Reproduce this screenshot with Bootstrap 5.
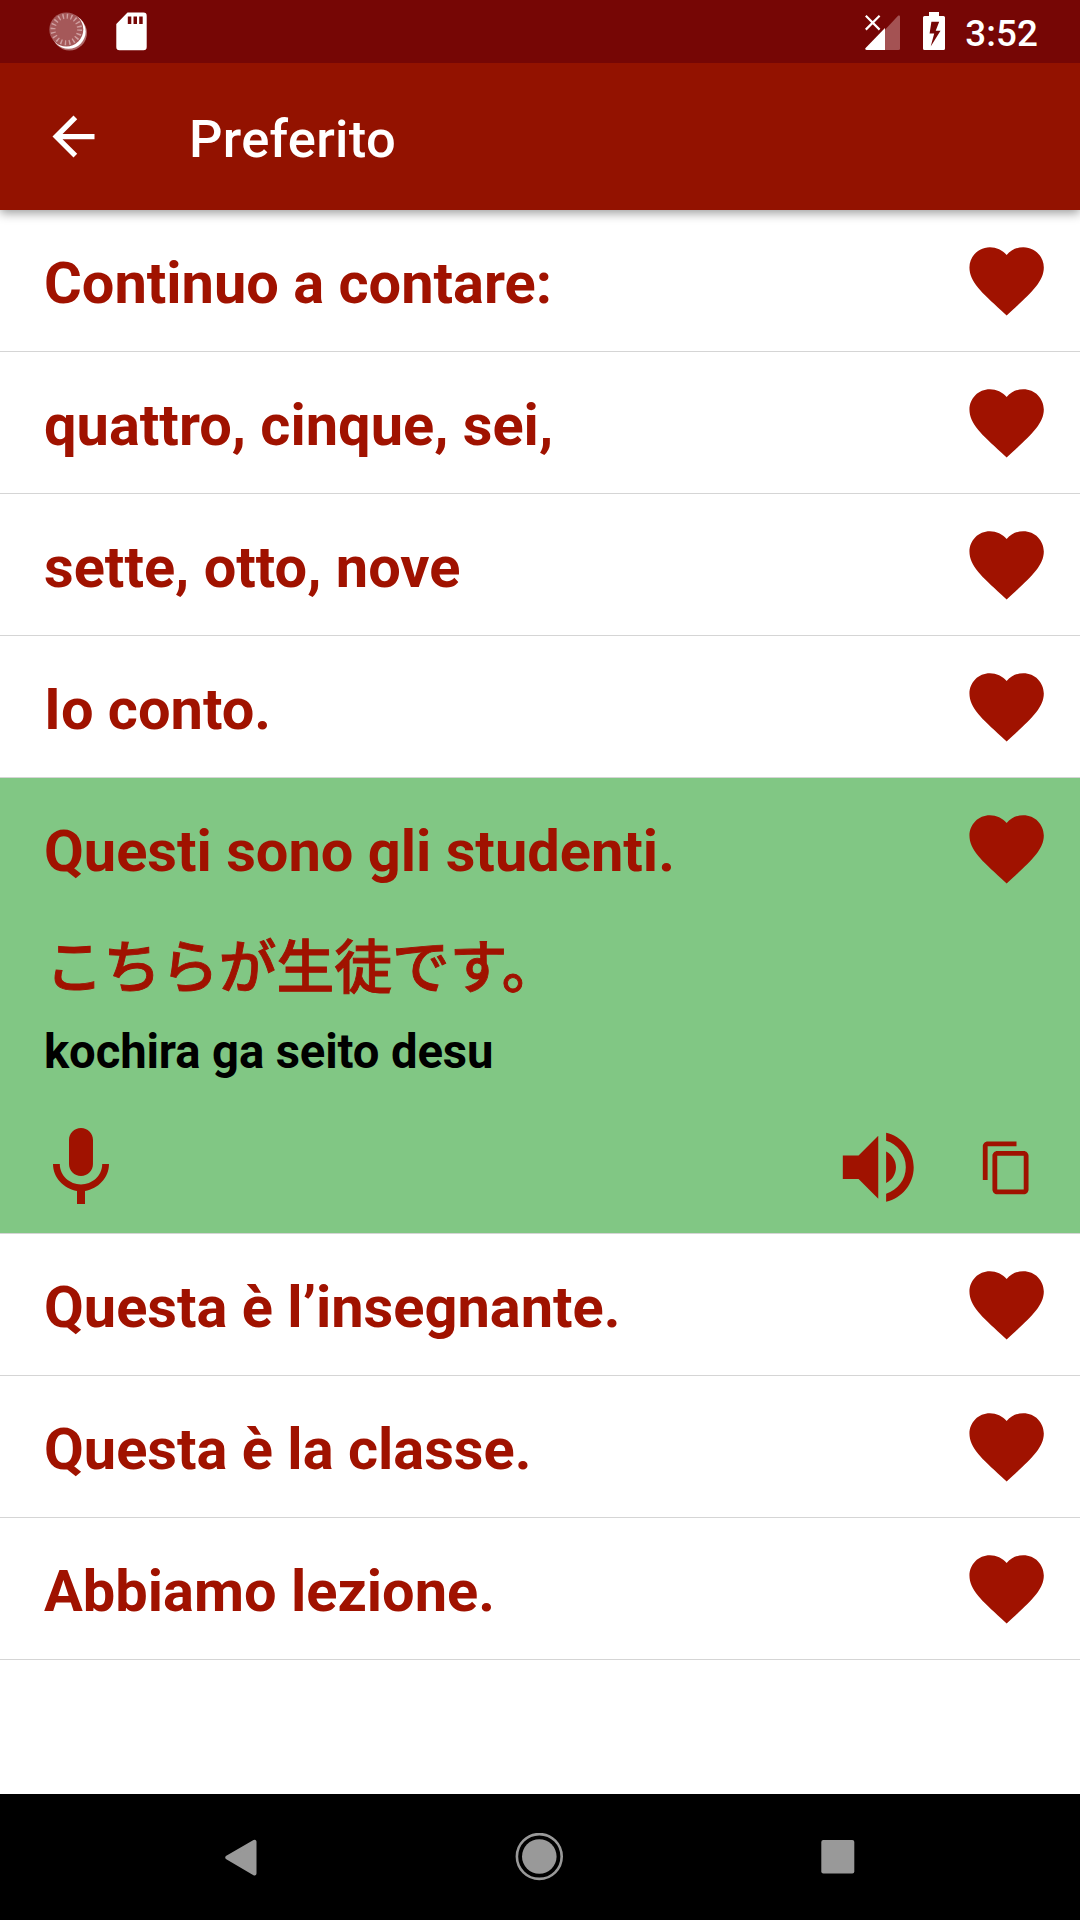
<!DOCTYPE html>
<html lang="it">
<head>
<meta charset="utf-8">
<meta name="viewport" content="width=device-width, initial-scale=1">
<title>Preferito</title>
<link href="https://cdn.jsdelivr.net/npm/bootstrap@5.3.0/dist/css/bootstrap.min.css" rel="stylesheet">
<style>
  :root { --brand: #a01200; }
  body { font-family: Roboto, "Noto Sans CJK JP", sans-serif; background: #fff; height: 1920px; overflow: hidden; }
  svg { display: block; flex: none; }
  .status-bar { height: 63px; background: #760605; padding: 0 42px 0 48px; z-index: 3; }
  .sd-icon { margin-left: 26px; }
  .battery-icon { margin-left: 23px; }
  .clock { font-size: 36.75px; line-height: 42px; font-weight: 500; padding-top: 4px; margin-left: 20.5px; letter-spacing: .1px; }
  .app-bar { height: 147px; background: #931200; padding: 0 42px; box-shadow: 0 3px 10px rgba(0,0,0,.4); z-index: 2; }
  .app-title { font-size: 52.5px; line-height: 62px; font-weight: 500; margin-left: 84px; padding-top: 4px; letter-spacing: .3px; }
  .list-group-flush > .phrase { border: 0; border-bottom: 1px solid #d5d5d5; border-radius: 0; padding: 0; color: var(--brand); background: #fff; }
  .list-group-flush > .phrase:last-child { border-bottom-width: 1px; }
  .phrase-head { height: 141px; padding: 26px 28.7px 0 44px; }
  .phrase-text { font-size: 57.75px; line-height: 68px; font-weight: 700; padding-top: 13px; }
  .list-group-flush > .phrase.open { background: #81c784; height: 456px; }
  .translation { font-size: 57.75px; line-height: 84px; font-weight: 500; font-family: "Noto Sans CJK JP", sans-serif; padding: 2px 45.5px 0; -webkit-text-stroke: .9px var(--brand); }
  .romaji { font-size: 47.25px; line-height: 56px; font-weight: 700; color: #000; padding: 19px 44px 0; letter-spacing: -.13px; }
  .tools { padding: 39.5px 44px 0 33px; }
  .copy-icon { margin-left: 52.5px; }
  .nav-keys { height: 126px; background: #000; padding-right: 1.5px; }
  .nav-key { width: 298.5px; }
</style>
</head>
<body class="d-flex flex-column">
<svg width="0" height="0" class="position-absolute">
  <symbol id="heart" viewBox="0 0 24 24"><path d="M12 21.35l-1.45-1.32C5.4 15.36 2 12.28 2 8.5 2 5.42 4.42 3 7.5 3c1.74 0 3.41.81 4.5 2.09C13.09 3.81 14.76 3 16.5 3 19.58 3 22 5.42 22 8.5c0 3.78-3.4 6.86-8.55 11.54L12 21.35z"/></symbol>
</svg>

<header class="status-bar d-flex align-items-center text-white position-relative">
  <svg width="42" height="63" viewBox="48 0 42 63">
    <circle cx="69.500" cy="33" r="17.500" fill="#b06a6a"/>
    <circle cx="68.500" cy="31.500" r="17.200" fill="#fff"/>
    <circle cx="66.300" cy="29.500" r="17" fill="#a55859"/>
    <circle cx="66.300" cy="29.500" r="13.300" fill="none" stroke="#cf9fa0" stroke-width="5" stroke-dasharray="1.400 2.778"/>
  </svg>
  <svg class="sd-icon" width="31" height="39" viewBox="0 0 31 39">
    <path fill="#fff" fill-rule="evenodd" d="M11.500 0.500H27.500a3.200 3.200 0 0 1 3.200 3.200V35a3.200 3.200 0 0 1-3.200 3.200H3.500A3.200 3.200 0 0 1 .3 35V12zM11.800 4.500v7.500h3.500V4.500zm5.700 0v7.500H21V4.500zm5.700 0v7.500h3.500V4.500z"/>
  </svg>
  <svg class="ms-auto" width="35" height="63" viewBox="0 0 35 63">
    <g transform="translate(0 15)">
    <path fill="#a45253" d="M20 14.800L33.300.6Q35 0 35 1.500V33.500a1.500 1.500 0 0 1-1.500 1.500H20z"/>
    <path fill="#fff" d="M20 13V35H1.500Q-.6 34.800.6 33z"/>
    <path stroke="#fff" stroke-width="2.200" d="M.8.800L14.600 14.600M14.600.800L.8 14.600"/>
    </g>
  </svg>
  <svg class="battery-icon" width="22" height="63" viewBox="0 0 22 63">
    <path transform="translate(0 12)" fill="#fff" fill-rule="evenodd" d="M6 0h10v4h4.500A1.500 1.500 0 0 1 22 5.500v31a1.500 1.500 0 0 1-1.500 1.500h-19A1.500 1.500 0 0 1 0 36.500v-31A1.500 1.500 0 0 1 1.500 4H6zM8.400 9.700L6.600 21.500h4.600L7.700 34.500 17.500 18.700h-4.800L16.200 9.700z"/>
  </svg>
  <div class="clock">3:52</div>
</header>

<nav class="app-bar d-flex align-items-center text-white position-relative">
  <svg width="63" height="63" viewBox="0 0 24 24" fill="#fff"><path d="M20 11H7.830l5.590-5.590L12 4l-8 8 8 8 1.410-1.410L7.830 13H20v-2z"/></svg>
  <div class="app-title">Preferito</div>
</nav>

<main class="list-group list-group-flush flex-grow-1">
  <div class="list-group-item phrase"><div class="phrase-head d-flex justify-content-between align-items-start"><div class="phrase-text">Continuo a contare:</div><svg width="89.250" height="89.250" fill="currentColor"><use href="#heart"/></svg></div></div>
  <div class="list-group-item phrase"><div class="phrase-head d-flex justify-content-between align-items-start"><div class="phrase-text">quattro, cinque, sei,</div><svg width="89.250" height="89.250" fill="currentColor"><use href="#heart"/></svg></div></div>
  <div class="list-group-item phrase"><div class="phrase-head d-flex justify-content-between align-items-start"><div class="phrase-text">sette, otto, nove</div><svg width="89.250" height="89.250" fill="currentColor"><use href="#heart"/></svg></div></div>
  <div class="list-group-item phrase"><div class="phrase-head d-flex justify-content-between align-items-start"><div class="phrase-text">Io conto.</div><svg width="89.250" height="89.250" fill="currentColor"><use href="#heart"/></svg></div></div>
  <div class="list-group-item phrase open">
    <div class="phrase-head d-flex justify-content-between align-items-start"><div class="phrase-text">Questi sono gli studenti.</div><svg width="89.250" height="89.250" fill="currentColor"><use href="#heart"/></svg></div>
    <div class="translation" lang="ja">こちらが生徒です。</div>
    <div class="romaji">kochira ga seito desu</div>
    <div class="tools d-flex align-items-center">
      <svg width="96" height="96" viewBox="0 0 24 24" fill="currentColor"><path d="M12 14c1.660 0 2.990-1.340 2.990-3L15 5c0-1.660-1.340-3-3-3S9 3.340 9 5v6c0 1.660 1.340 3 3 3zm5.300-3c0 3-2.540 5.100-5.300 5.100S6.700 14 6.700 11H5c0 3.410 2.720 6.230 6 6.720V21h2v-3.280c3.280-.48 6-3.300 6-6.720h-1.700z"/></svg>
      <svg class="ms-auto" width="94.500" height="94.500" viewBox="0 0 24 24" fill="currentColor"><path d="M3 9v6h4l5 5V4L7 9H3zm13.500 3c0-1.770-1.020-3.290-2.500-4.030v8.050c1.480-.73 2.500-2.250 2.500-4.020zM14 3.230v2.060c2.890.86 5 3.540 5 6.710s-2.110 5.850-5 6.710v2.060c4.010-.91 7-4.490 7-8.770s-2.990-7.860-7-8.770z"/></svg>
      <svg class="copy-icon" width="57.750" height="57.750" viewBox="0 0 24 24" fill="currentColor"><path d="M16 1H4c-1.100 0-2 .9-2 2v14h2V3h12V1zm3 4H8c-1.100 0-2 .9-2 2v14c0 1.100.9 2 2 2h11c1.100 0 2-.9 2-2V7c0-1.100-.9-2-2-2zm0 16H8V7h11v14z"/></svg>
    </div>
  </div>
  <div class="list-group-item phrase"><div class="phrase-head d-flex justify-content-between align-items-start"><div class="phrase-text">Questa è l’insegnante.</div><svg width="89.250" height="89.250" fill="currentColor"><use href="#heart"/></svg></div></div>
  <div class="list-group-item phrase"><div class="phrase-head d-flex justify-content-between align-items-start"><div class="phrase-text">Questa è la classe.</div><svg width="89.250" height="89.250" fill="currentColor"><use href="#heart"/></svg></div></div>
  <div class="list-group-item phrase"><div class="phrase-head d-flex justify-content-between align-items-start"><div class="phrase-text">Abbiamo lezione.</div><svg width="89.250" height="89.250" fill="currentColor"><use href="#heart"/></svg></div></div>
</main>

<footer class="nav-keys d-flex justify-content-center align-items-center">
  <div class="nav-key d-flex justify-content-center"><svg width="32" height="48" viewBox="0 0 32 48" fill="#999"><path stroke="#999" stroke-width="4" stroke-linejoin="round" d="M2.300 24.500L29.500 8.800V40.500z"/></svg></div>
  <div class="nav-key d-flex justify-content-center"><svg width="49" height="49" viewBox="0 0 49 49"><circle cx="24.300" cy="23.500" r="22.400" fill="none" stroke="#999" stroke-width="2.600"/><circle cx="24.300" cy="23.500" r="17.300" fill="#999"/></svg></div>
  <div class="nav-key d-flex justify-content-center"><svg width="34" height="48" viewBox="0 0 34 48"><rect x=".3" y="7" width="33" height="33.500" rx="2" fill="#999"/></svg></div>
</footer>
<script src="https://cdn.jsdelivr.net/npm/bootstrap@5.3.0/dist/js/bootstrap.bundle.min.js"></script>
</body>
</html>
